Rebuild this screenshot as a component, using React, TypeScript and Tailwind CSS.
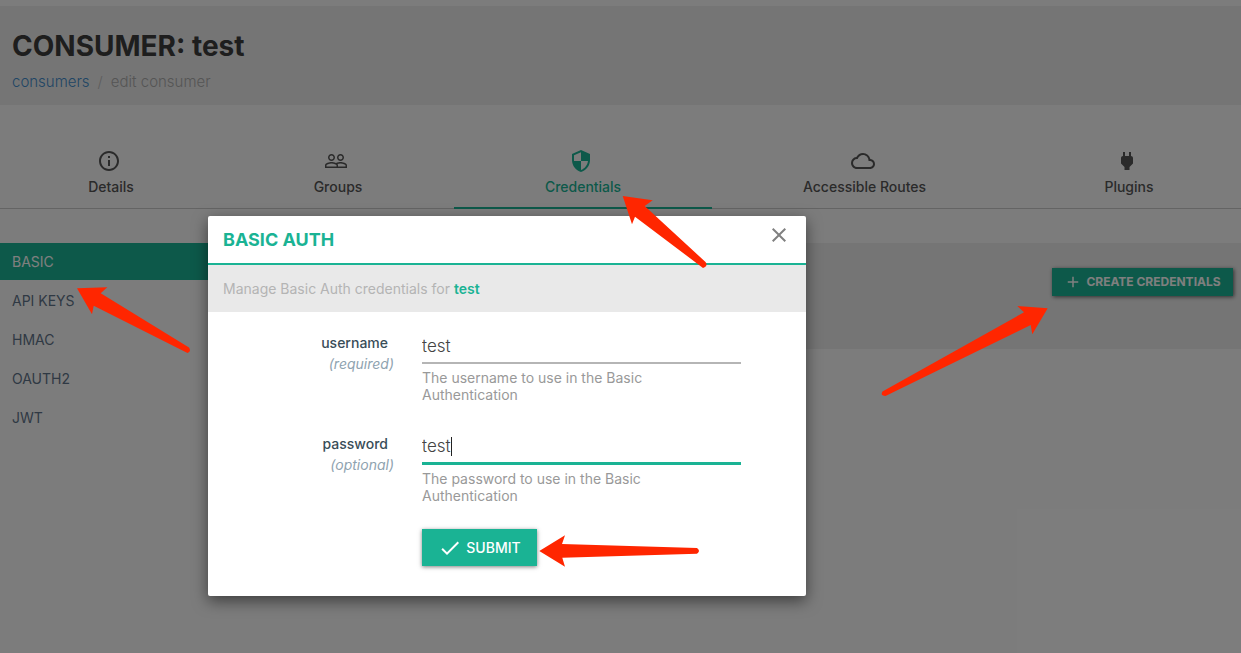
import { useState } from 'react';
import { MdCheck, MdClose, MdInfoOutline, MdPeopleOutline, MdAdd, MdCloudQueue, MdPower } from 'react-icons/md';

const shield =
  'M12,12H19C18.47,16.11 15.72,19.78 12,20.92V12H5V6.3L12,3.19M12,1L3,5V11C3,16.55 6.84,21.73 12,23C17.16,21.73 21,16.55 21,11V5L12,1Z';

function ShieldIcon({ className }: { className?: string }) {
  return (
    <svg viewBox="0 0 24 24" fill="currentColor" className={className}>
      <path d={shield} />
    </svg>
  );
}

const tabs = [
  { name: 'Details', icon: MdInfoOutline },
  { name: 'Groups', icon: MdPeopleOutline },
  { name: 'Credentials', icon: ShieldIcon },
  { name: 'Accessible Routes', icon: MdCloudQueue },
  { name: 'Plugins', icon: MdPower },
];

const methods = ['BASIC', 'API KEYS', 'HMAC', 'OAUTH2', 'JWT'];

const arrows = [
  'M622.7 196 L652.7 200.3 L644.7 206 L705.5 262 Q708.5 266 703 268 L635 216.7 L632 224.3 Z',
  'M1047.7 308.3 L1017.3 306 L1024 312.3 L882.5 391.5 Q880 395.5 885.5 396 L1030.7 325 L1032.3 334.3 Z',
  'M77 288.3 L107.3 287.3 L100.7 293.3 L189 347.5 Q191.5 351.5 187.5 353 L93.7 305.7 L92 314.3 Z',
  'M539.3 551 L565 535.3 L562 544 L697 548 Q701 551 697 553.7 L562.3 557.7 L565 566.7 Z',
];

function Field({ name, note, help, focused }: { name: string; note: string; help: string; focused?: boolean }) {
  const [value, setValue] = useState('test');

  return (
    <div className="flex h-[101px] items-start gap-7">
      <label htmlFor={name} className="w-[186px] shrink-0 text-right text-sm text-[#394d58]">
        <span className="mr-1.5 block leading-5 font-medium">{name}</span>
        <em className="block leading-[22px] text-[#8fa3b0]">{`(${note})`}</em>
      </label>
      <div className="flex-1">
        <div className="relative">
          <input
            id={name}
            value={value}
            onChange={(e) => setValue(e.target.value)}
            className={
              focused
                ? 'block h-[31px] w-full border-b-3 border-[#1ab394] pb-1 text-[17px] font-light text-[#444] outline-none'
                : 'block h-[31px] w-full border-b-2 border-[#b5b5b5] pb-1 text-[17px] font-light text-[#444] outline-none'
            }
          />
          {focused && <span className="absolute top-[3px] left-[29px] h-[19px] w-px bg-[#222]" />}
        </div>
        <p className="mt-[5px] max-w-[260px] text-sm leading-[17px] text-[#999]">{help}</p>
      </div>
    </div>
  );
}

function BasicAuthModal() {
  return (
    <div role="dialog" aria-labelledby="modal-title" className="w-[598px] rounded-xs bg-white shadow-[0_5px_15px_rgba(0,0,0,0.5)]">
      <div className="flex h-[49px] items-center justify-between border-b-2 border-[#1ab394] px-[15px]">
        <h2 id="modal-title" className="text-lg font-bold text-[#1ab394]">BASIC AUTH</h2>
        <button aria-label="Close" className="-mt-2.5 text-[#808080]">
          <MdClose className="h-6 w-6" />
        </button>
      </div>
      <p className="bg-[#e9e9e9] px-[15px] pt-3.5 pb-[13px] text-sm leading-5 text-[#b4b4b4]">
        Manage Basic Auth credentials for <b className="font-semibold text-[#1ab394]">test</b>
      </p>
      <form className="pt-[21px] pr-[65px] pb-[30px]" onSubmit={(e) => e.preventDefault()}>
        <Field name="username" note="required" help="The username to use in the Basic Authentication" />
        <Field name="password" note="optional" help="The password to use in the Basic Authentication" focused />
        <button className="mt-[-6px] ml-[214px] flex h-[37px] w-[115px] items-center justify-center gap-1 bg-[#1ab394] text-sm font-medium text-white shadow-[0_1px_4px_rgba(0,0,0,0.5)]">
          <MdCheck className="h-6 w-6" />
          SUBMIT
        </button>
      </form>
    </div>
  );
}

export default function App() {
  return (
    <div className="relative min-h-screen bg-[#f9f9f9] pt-1.5 font-['Inter',sans-serif]">
      <header className="h-[99px] bg-[#ebebeb] px-3 pt-6">
        <h1 className="text-[28px] leading-8 font-bold text-[#3c3c3c]">CONSUMER: test</h1>
        <nav className="mt-2.5 flex gap-2 text-[15px] leading-5 font-light">
          <a href="#consumers" className="text-[#428bca]">consumers</a>
          <span className="text-[#bbb]">/</span>
          <span className="text-[#aaa]">edit consumer</span>
        </nav>
      </header>

      <nav className="mt-[37px] grid h-[67px] grid-cols-[222fr_232fr_258fr_305fr_224fr] border-b border-[#c8c8c8]">
        {tabs.map(({ name, icon: Icon }) => (
          <a
            key={name}
            href="#tab"
            className={
              name === 'Credentials'
                ? 'flex h-[67px] flex-col items-center border-b-2 border-[#1ab394] pt-[7px] text-[#1ab394]'
                : 'flex flex-col items-center pt-[7px] text-[#555]'
            }
          >
            <Icon className="mr-1 h-6 w-6" />
            <span className="mt-1 text-sm leading-5 font-medium">{name}</span>
          </a>
        ))}
      </nav>

      <main className="mt-[34px] flex">
        <ul className="flex w-1/5 flex-col gap-0.5 text-sm">
          {methods.map((m) => (
            <li key={m}>
              <a
                href="#method"
                className={
                  m === 'BASIC'
                    ? 'flex h-[37px] items-center bg-[#1ab394] px-3 text-white'
                    : 'flex h-[37px] items-center px-3 text-[#5f7388]'
                }
              >
                {m}
              </a>
            </li>
          ))}
        </ul>
        <section className="flex h-[106px] flex-1 items-start justify-end bg-[#ebebeb] pt-[25px] pr-2">
          <button className="flex h-7 w-[181px] items-center justify-center gap-1 bg-[#1ab394] text-xs font-bold text-white shadow-[1px_1px_4px_rgba(0,0,0,0.6)]">
            <MdAdd className="h-[18px] w-[18px]" />
            CREATE CREDENTIALS
          </button>
        </section>
      </main>

      <div className="absolute inset-0 bg-black/50 pt-[216px] pl-[208px]">
        <BasicAuthModal />
      </div>

      <svg className="pointer-events-none absolute inset-0 h-full w-full" fill="#ff2600" aria-hidden="true">
        {arrows.map((d) => (
          <path key={d} d={d} />
        ))}
      </svg>
    </div>
  );
}
